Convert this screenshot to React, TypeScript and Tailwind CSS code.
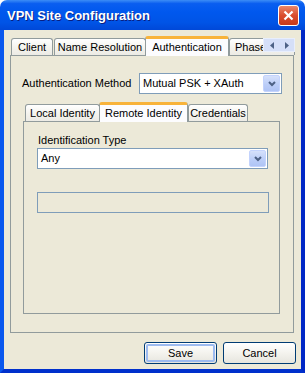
const font = "font-['Liberation_Sans',Arial,sans-serif] text-[11px] leading-[13px] text-black";

function Tab({ label, w, selected, className = "" }: { label: string; w: number; selected?: boolean; className?: string }) {
  if (selected) {
    return (
      <div
        style={{ width: w }}
        className={`relative z-10 h-[20px] -mb-px flex items-start justify-center pt-[2px] rounded-t-[3px] border-x border-[#919B9C] border-t-[3px] border-t-[#F8B33A] bg-[#FCFCFE] shrink-0 ${className}`}
      >
        <span className="whitespace-nowrap">{label}</span>
      </div>
    );
  }
  return (
    <div
      style={{ width: w }}
      className={`h-[17px] flex items-center justify-center rounded-t-[3px] border-x border-t border-[#919B9C] bg-[linear-gradient(to_bottom,#FFFFFF,#F3F2EC_60%,#ECEBE5)] shrink-0 overflow-hidden ${className}`}
    >
      <span className="whitespace-nowrap">{label}</span>
    </div>
  );
}

function Chevron() {
  return (
    <svg width="8" height="6" viewBox="0 0 8 6">
      <path d="M1 1 L4 4 L7 1" fill="none" stroke="#4D6185" strokeWidth="2" />
    </svg>
  );
}

function Select({ value, w }: { value: string; w: number }) {
  return (
    <div style={{ width: w }} className="h-[21px] flex items-center border border-[#7F9DB9] bg-white pl-[3px] pr-px shrink-0">
      <span className="flex-1 whitespace-nowrap">{value}</span>
      <div className="w-[17px] h-[17px] flex items-center justify-center rounded-[2px] border border-[#C3D3FD] bg-[linear-gradient(to_bottom,#D6E1FB,#BCCEF8_55%,#AFC4F5)]">
        <Chevron />
      </div>
    </div>
  );
}

function Button({ label, isDefault }: { label: string; isDefault?: boolean }) {
  return (
    <div className="w-[73px] h-[22px] rounded-[3px] border border-[#003C74] bg-[linear-gradient(to_bottom,#FFFFFF,#F4F3EE_50%,#E6E5DE)] p-px">
      <div
        className={`h-full flex items-center justify-center rounded-[2px] ${isDefault ? "border-2 border-[#9DBBF0]" : ""}`}
      >
        {label}
      </div>
    </div>
  );
}

export default function App() {
  return (
    <div className={`w-[305px] h-[373px] bg-white ${font}`}>
      <div className="w-full h-full flex flex-col rounded-t-[7px] overflow-hidden">
        {/* title bar */}
        <div className="h-[30px] shrink-0 flex items-center pl-[7px] pr-[6px] bg-[linear-gradient(to_bottom,#3C8DF6_0%,#0A5EF0_12%,#0058EE_40%,#0054E6_75%,#0048D8_100%)]">
          <span className="flex-1 font-['Liberation_Sans',Arial,sans-serif] font-bold text-[13px] text-white [text-shadow:1px_1px_0_#0A1E80]">
            VPN Site Configuration
          </span>
          <div className="w-[21px] h-[21px] flex items-center justify-center rounded-[3px] border border-white bg-[linear-gradient(to_bottom,#E9876A,#DA4D2E_50%,#C6391A)]">
            <svg width="11" height="11" viewBox="0 0 11 11">
              <path d="M1.5 1.5 L9.5 9.5 M9.5 1.5 L1.5 9.5" stroke="white" strokeWidth="2.2" />
            </svg>
          </div>
        </div>

        {/* client area */}
        <div className="flex-1 flex flex-col bg-[#ECE9D8] border-l-4 border-l-[#0A58EE] border-r-4 border-r-[#0027C6] border-b-4 border-b-[#0030CC] pt-[6px] pl-[6px]">
          {/* outer tab control */}
          <div className="w-[284px] flex flex-col">
            <div className="h-[19px] flex items-end pl-px">
              <Tab label="Client" w={42} />
              <Tab label="Name Resolution" w={92} className="ml-px" />
              <Tab label="Authentication" w={84} selected className="-ml-px" />
              <div className="relative h-[17px] w-[66px] flex items-center pl-[5px] rounded-t-[3px] border-x border-t border-[#919B9C] bg-[linear-gradient(to_bottom,#FFFFFF,#F3F2EC_60%,#ECEBE5)] shrink-0">
                <span className="whitespace-nowrap">Phase</span>
                {/* scroll arrows lie over the last tab */}
                <div className="absolute left-[33px] -top-px h-[14px] w-[32px] flex border border-[#E8EEFC] bg-[#D5DFF8]">
                  <div className="flex-1 flex items-center justify-center">
                    <svg width="4" height="7" viewBox="0 0 4 7"><path d="M4 0 L0 3.5 L4 7 Z" fill="#4D6185" /></svg>
                  </div>
                  <div className="flex-1 flex items-center justify-center">
                    <svg width="4" height="7" viewBox="0 0 4 7"><path d="M0 0 L4 3.5 L0 7 Z" fill="#4D6185" /></svg>
                  </div>
                </div>
              </div>
            </div>
            <div className="h-[278px] border border-[#919B9C] bg-[#ECE9D8] pt-[17px] pl-[11px] pr-[11px] flex flex-col">
              <div className="flex items-center justify-between">
                <span>Authentication Method</span>
                <Select value="Mutual PSK + XAuth" w={143} />
              </div>

              {/* inner tab control */}
              <div className="w-[257px] ml-px mt-[7px] flex flex-col">
                <div className="h-[20px] flex items-end pl-[2px]">
                  <Tab label="Local Identity" w={75} />
                  <Tab label="Remote Identity" w={89} selected className="-ml-px" />
                  <Tab label="Credentials" w={60} />
                </div>
                <div className="h-[193px] border border-[#919B9C] pt-[12px] pl-[13px] flex flex-col">
                  <span className="pl-px mb-px">Identification Type</span>
                  <Select value="Any" w={231} />
                  <div className="w-[232px] h-[21px] mt-[23px] border border-[#7F9DB9]" />
                </div>
              </div>
            </div>
          </div>

          {/* buttons */}
          <div className="mt-[9px] flex justify-end gap-[6px] pr-[5px]">
            <Button label="Save" isDefault />
            <Button label="Cancel" />
          </div>
        </div>
      </div>
    </div>
  );
}
